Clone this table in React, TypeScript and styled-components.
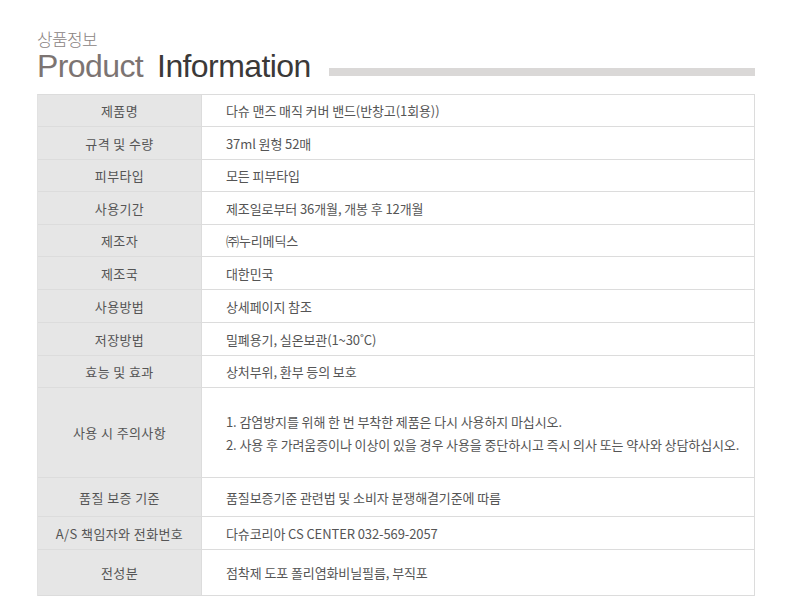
import React from "react";
import styled, { createGlobalStyle } from "styled-components";

const Global = createGlobalStyle`
  html, body { margin: 0; padding: 0; background: #fff; }
  body { font-family: "Noto Sans CJK KR", "Noto Sans", sans-serif; }
`;

const Page = styled.div`
  width: 793px;
  height: 616px;
  box-sizing: border-box;
  padding: 30px 38px 0 37px;
  background: #fff;
`;

const Heading = styled.div`
  display: flex;
  flex-direction: column;
  margin-bottom: 9px;
`;

const KoTitle = styled.div`
  font-family: "Noto Sans CJK KR", sans-serif;
  font-size: 17px;
  font-weight: 300;
  line-height: 18px;
  color: #8a8382;
  letter-spacing: -0.6px;
`;

const TitleRow = styled.div`
  display: flex;
  align-items: flex-end;
  gap: 18px;
`;

const EnTitle = styled.div`
  font-family: "Liberation Sans", Arial, sans-serif;
  font-size: 32px;
  line-height: 37px;
  letter-spacing: -0.6px;
  white-space: nowrap;
  color: #3b3938;
`;

const Light = styled.span`
  color: #7c7472;
  margin-right: 14px;
`;

const TitleBar = styled.div`
  flex: 1;
  height: 8px;
  background: #dad8d7;
  margin-bottom: 9px;
`;

const Table = styled.div`
  display: flex;
  flex-direction: column;
  border-top: 1px solid #dcdcdc;
  border-left: 1px solid #e2e2e2;
  border-right: 1px solid #dcdcdc;
`;

const Row = styled.div<{ $h: number }>`
  display: flex;
  height: ${(p) => p.$h}px;
  border-bottom: 1px solid #dcdcdc;
  box-sizing: border-box;
`;

const Label = styled.div`
  width: 163px;
  flex-shrink: 0;
  background: #e6e6e6;
  border-right: 1px solid #dcdcdc;
  display: flex;
  align-items: center;
  justify-content: center;
  font-size: 13px;
  color: #555;
  letter-spacing: 0.4px;
  white-space: nowrap;
`;

const Value = styled.div`
  flex: 1;
  display: flex;
  flex-direction: column;
  justify-content: center;
  padding-left: 24px;
  font-size: 13px;
  color: #555;
  letter-spacing: -0.1px;
  white-space: nowrap;
`;

const Line = styled.div`
  line-height: 23px;
`;

const rows: { label: string; value: string[]; h: number }[] = [
  { label: "제품명", value: ["다슈 맨즈 매직 커버 밴드(반창고(1회용))"], h: 32 },
  { label: "규격 및 수량", value: ["37ml 원형 52매"], h: 33 },
  { label: "피부타입", value: ["모든 피부타입"], h: 32 },
  { label: "사용기간", value: ["제조일로부터 36개월, 개봉 후 12개월"], h: 33 },
  { label: "제조자", value: ["㈜누리메딕스"], h: 32 },
  { label: "제조국", value: ["대한민국"], h: 33 },
  { label: "사용방법", value: ["상세페이지 참조"], h: 33 },
  { label: "저장방법", value: ["밀폐용기, 실온보관(1~30˚C)"], h: 33 },
  { label: "효능 및 효과", value: ["상처부위, 환부 등의 보호"], h: 32 },
  {
    label: "사용 시 주의사항",
    value: [
      "1. 감염방지를 위해 한 번 부착한 제품은 다시 사용하지 마십시오.",
      "2. 사용 후 가려움증이나 이상이 있을 경우 사용을 중단하시고 즉시 의사 또는 약사와 상담하십시오.",
    ],
    h: 90,
  },
  { label: "품질 보증 기준", value: ["품질보증기준 관련법 및 소비자 분쟁해결기준에 따름"], h: 39 },
  { label: "A/S 책임자와 전화번호", value: ["다슈코리아 CS CENTER 032-569-2057"], h: 33 },
  { label: "전성분", value: ["점착제 도포 폴리염화비닐필름, 부직포"], h: 46 },
];

export default function App() {
  return (
    <>
      <Global />
      <Page>
        <Heading>
          <KoTitle>상품정보</KoTitle>
          <TitleRow>
            <EnTitle>
              <Light>Product</Light>Information
            </EnTitle>
            <TitleBar />
          </TitleRow>
        </Heading>
        <Table>
          {rows.map((r) => (
            <Row key={r.label} $h={r.h}>
              <Label>{r.label}</Label>
              <Value>
                {r.value.map((v) => (
                  <Line key={v}>{v}</Line>
                ))}
              </Value>
            </Row>
          ))}
        </Table>
      </Page>
    </>
  );
}
